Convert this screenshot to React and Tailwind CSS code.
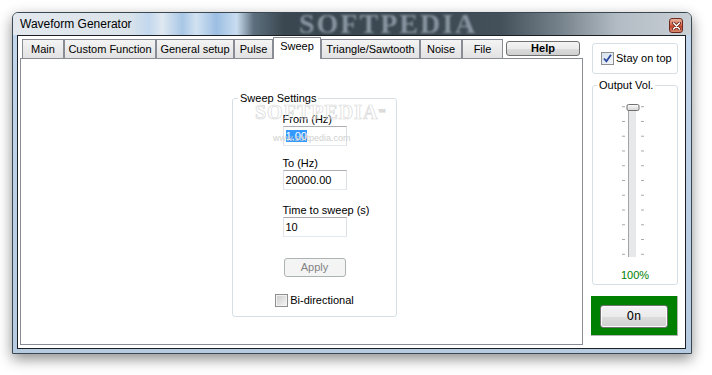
export default function App() {
  const tabs = [
    { label: "Main", cls: "w-[42px]" },
    { label: "Custom Function", cls: "w-[92px]" },
    { label: "General setup", cls: "w-[78px]" },
    { label: "Pulse", cls: "w-[39px]" },
    { label: "Sweep", cls: "w-[48px]", active: true },
    { label: "Triangle/Sawtooth", cls: "w-[99px]" },
    { label: "Noise", cls: "w-[42px]" },
    { label: "File", cls: "w-[41px]" },
  ];
  const ticks = Array.from({ length: 11 }, (_, i) => 14.7 + i * 14.76);

  return (
    <div className="w-[712px] h-[375px] bg-white pl-[12px] pt-[12px] font-['Liberation_Sans',Arial,sans-serif] text-[11px] text-black overflow-hidden">
      <div className="w-[680px] h-[342px] flex flex-col border border-[#3b4751] rounded-t-[6px] bg-[linear-gradient(180deg,#c3d8ec,#b6cbe0)] shadow-[0_5px_14px_rgba(0,0,0,0.45)] overflow-hidden">
        {/* Title bar */}
        <div className="relative h-[22px] shrink-0 flex items-start justify-between overflow-hidden bg-[linear-gradient(90deg,#e2e8ee_0%,#dbe3ea_17%,#c2d8ee_20%,#dfe8f1_22%,#a8c6e5_25%,#d2e2f2_27%,#9cbee2_30%,#c9ddf0_33%,#5d6f7e_35.5%,#3a4750_40%,#3c4952_62%,#44515a_72%,#78848d_81%,#b2bbc3_89%,#c9d0d6_100%)]">
          <div className="absolute left-[286px] top-[-3px] font-['Liberation_Serif',serif] font-bold text-[28px] leading-[28px] tracking-[2px] text-[#8795a0] blur-[1.3px] whitespace-nowrap">
            SOFTPEDIA
          </div>
          <span className="relative pl-[7px] pt-[4px] text-[12px] leading-[15px] whitespace-nowrap">
            Waveform Generator
          </span>
          <div className="relative mt-[5px] mr-[8px] w-[14px] h-[15px] rounded-[3px] border border-[#6e2a1e] bg-[linear-gradient(180deg,#e9b3a0_0%,#d46a4f_45%,#c2432a_55%,#d98a70_100%)] flex items-center justify-center">
            <svg width="9" height="8" viewBox="0 0 9 8">
              <path d="M1.5 1 L7.5 7 M7.5 1 L1.5 7" stroke="#5b1b10" strokeWidth="3" strokeLinecap="round" />
              <path d="M1.5 1 L7.5 7 M7.5 1 L1.5 7" stroke="#ffffff" strokeWidth="1.6" strokeLinecap="round" />
            </svg>
          </div>
        </div>

        {/* Frame body */}
        <div className="flex-1 flex pl-[4px] pr-[5px] pb-[4px]">
          <div className="flex-1 flex border border-[#1b1f24] bg-white pl-[2px] pt-[1px] pb-[3px]">
            {/* Tab control */}
            <div className="w-[563px] flex flex-col">
              <div className="h-[21px] flex items-end pl-[2px] relative z-10">
                {tabs.map((t) =>
                  t.active ? (
                    <div
                      key={t.label}
                      className={`${t.cls} shrink-0 h-[22px] -mb-[1px] border border-b-0 border-[#898c95] bg-white flex justify-center pt-[2px] leading-[13px] whitespace-nowrap`}
                    >
                      {t.label}
                    </div>
                  ) : (
                    <div
                      key={t.label}
                      className={`${t.cls} shrink-0 h-[19px] border border-b-0 border-[#898c95] bg-[linear-gradient(180deg,#f4f4f4,#e2e2e2)] flex justify-center pt-[3px] leading-[13px] whitespace-nowrap`}
                    >
                      {t.label}
                    </div>
                  )
                )}
                <div className="ml-[3px] mb-[2px] w-[74px] h-[15px] shrink-0 rounded-[3px] border border-[#707070] bg-[linear-gradient(180deg,#f4f4f4_0%,#ebebeb_50%,#dddddd_50%,#cfcfcf_100%)] flex items-center justify-center font-bold leading-[13px]">
                  Help
                </div>
              </div>

              <div className="flex-1 relative border border-[#898c95] bg-white">
                <fieldset className="ml-[211px] mt-[33px] w-[165px] h-[225px] border border-[#d5dfe5] rounded-[3px]">
                  <legend className="ml-[5px] px-[2px] leading-[13px] whitespace-nowrap">Sweep Settings</legend>
                  <div className="flex flex-col items-center pt-[8px]">
                    <div className="w-[64px]">
                      <div className="leading-[13px] whitespace-nowrap">From (Hz)</div>
                      <div className="w-[64px] h-[20px] border border-[#abadb3] border-l-[#e2e3ea] border-r-[#dbdfe6] border-b-[#e3e9ef] flex items-center pl-[2px]">
                        <span className="bg-[#3399ff] text-white leading-[12px]">1.00</span>
                      </div>
                    </div>
                    <div className="w-[64px] mt-[11px]">
                      <div className="leading-[13px] whitespace-nowrap">To (Hz)</div>
                      <div className="w-[64px] h-[20px] border border-[#abadb3] border-l-[#e2e3ea] border-r-[#dbdfe6] border-b-[#e3e9ef] flex items-center pl-[2px] leading-[12px]">
                        20000.00
                      </div>
                    </div>
                    <div className="w-[64px] mt-[14px]">
                      <div className="leading-[13px] whitespace-nowrap">Time to sweep (s)</div>
                      <div className="w-[64px] h-[20px] border border-[#abadb3] border-l-[#e2e3ea] border-r-[#dbdfe6] border-b-[#e3e9ef] flex items-center pl-[2px] leading-[12px]">
                        10
                      </div>
                    </div>
                    <div className="mt-[21px] w-[62px] h-[19px] rounded-[3px] border border-[#adb2b5] bg-[#f4f4f4] flex items-center justify-center text-[#838383] leading-[13px]">
                      Apply
                    </div>
                    <div className="mt-[17px] flex items-center gap-[2px] leading-[13px]">
                      <div className="w-[13px] h-[13px] border border-[#8e8f8f] bg-[linear-gradient(135deg,#cbcbcb,#f6f6f6)] shadow-[inset_0_0_0_1px_#f2f2f2]" />
                      <span className="whitespace-nowrap">Bi-directional</span>
                    </div>
                  </div>
                </fieldset>

                {/* watermark overlay */}
                <div className="absolute left-[234px] top-[43px] font-['Liberation_Serif',serif] font-bold text-[20px] leading-[20px] tracking-[1px] text-transparent [-webkit-text-stroke:0.7px_#d9d9d9] whitespace-nowrap pointer-events-none">
                  SOFTPEDIA<span className="text-[7px] align-top">™</span>
                </div>
                <div className="absolute left-[252px] top-[74px] text-[9px] leading-[10px] text-[#cfcfcf] whitespace-nowrap pointer-events-none">
                  www.softpedia.com
                </div>
              </div>
            </div>

            {/* Right column */}
            <div className="w-[86px] ml-[9px] flex flex-col">
              <div className="mt-[6px] h-[31px] border border-[#d5dfe5] rounded-[3px] flex items-center pl-[8px] gap-[2px] leading-[13px]">
                <div className="w-[13px] h-[13px] border border-[#8e8f8f] bg-[linear-gradient(135deg,#d6e0ec,#f5f8fb)] flex items-center justify-center">
                  <svg width="11" height="11" viewBox="0 0 11 11">
                    <path d="M2 5.5 L4.4 8.3 L9 1.8" fill="none" stroke="#2c4a9e" strokeWidth="1.9" />
                  </svg>
                </div>
                <span className="whitespace-nowrap">Stay on top</span>
              </div>

              <fieldset className="mt-[5px] h-[206px] border border-[#d5dfe5] rounded-[3px]">
                <legend className="ml-[4px] px-[2px] leading-[13px] whitespace-nowrap">Output Vol.</legend>
                <svg width="84" height="177" viewBox="0 0 84 177" className="block">
                  <defs>
                    <linearGradient id="thumb" x1="0" y1="0" x2="0" y2="1">
                      <stop offset="0" stopColor="#fbfbfb" />
                      <stop offset="1" stopColor="#d4d4d4" />
                    </linearGradient>
                  </defs>
                  {ticks.map((y, i) => (
                    <g key={i}>
                      <line x1="29" y1={y} x2="32" y2={y} stroke="#a9a9a9" strokeWidth="1" />
                      <line x1="48" y1={y} x2="51" y2={y} stroke="#a9a9a9" strokeWidth="1" />
                    </g>
                  ))}
                  <rect x="35.5" y="16" width="7.5" height="149" fill="#e6e8e9" />
                  <line x1="35.5" y1="16" x2="35.5" y2="165" stroke="#a3a3a3" strokeWidth="1" />
                  <rect x="34" y="12.5" width="12" height="6" rx="1.5" fill="url(#thumb)" stroke="#707070" strokeWidth="1" />
                </svg>
                <div className="text-center leading-[13px] text-[#008000]">100%</div>
              </fieldset>

              <div className="mt-[11px] -ml-[1px] w-[87px] h-[40px] bg-[#008000] border-r border-b border-[#b4b4b4] pl-[9px] pt-[9px]">
                <div className="w-[68px] h-[23px] rounded-[3px] border border-[#707070] bg-[linear-gradient(180deg,#f2f2f2_0%,#ebebeb_50%,#dddddd_50%,#cfcfcf_100%)] shadow-[inset_0_0_0_1px_#fbfbfb] flex items-center justify-center font-['Liberation_Mono',monospace] text-[12px] leading-[14px]">
                  On
                </div>
              </div>
            </div>
          </div>
        </div>
      </div>
    </div>
  );
}
